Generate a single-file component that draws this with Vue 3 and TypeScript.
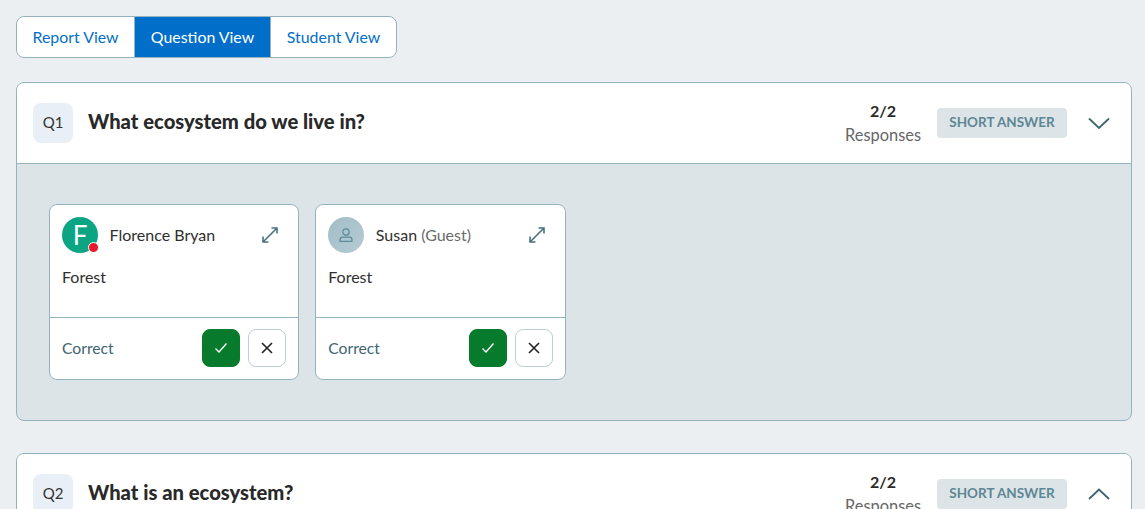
<script setup lang="ts">
interface Resp { name: string; guest?: boolean; initial?: string }
const responses: Resp[] = [
  { name: 'Florence Bryan', initial: 'F' },
  { name: 'Susan', guest: true },
]
const tabs = ['Report View', 'Question View', 'Student View']
</script>

<template>
  <div class="page">
    <div class="tabs">
      <button v-for="(t, i) in tabs" :key="t" class="tab" :class="{ active: i === 1 }">{{ t }}</button>
    </div>

    <section class="question">
      <header class="qhead">
        <div class="qnum">Q1</div>
        <h2 class="qtitle">What ecosystem do we live in?</h2>
        <div class="count"><b>2/2</b><span>Responses</span></div>
        <div class="chip">SHORT ANSWER</div>
        <svg class="chev" width="24" height="14" viewBox="0 0 24 14" fill="none"><path d="M2 2.5 12 12 22 2.5" stroke="#3f6470" stroke-width="1.8" /></svg>
      </header>
      <div class="qbody">
        <article v-for="r in responses" :key="r.name" class="resp">
          <div class="rtop">
            <div class="avatar" :class="{ guest: r.guest }">
              <template v-if="r.initial">{{ r.initial }}<i class="dot"></i></template>
              <svg v-else width="16" height="16" viewBox="0 0 16 16" fill="none" stroke="#5d8a9a" stroke-width="1.2">
                <circle cx="8" cy="5" r="3.2" />
                <path d="M2 14.4v-1.6c0-1.6 1.2-2.6 2.8-2.6h6.4c1.6 0 2.8 1 2.8 2.6v1.6z" stroke-linejoin="round" />
              </svg>
            </div>
            <div class="name">{{ r.name }}<span v-if="r.guest" class="guest-label"> (Guest)</span></div>
            <svg class="expand" width="18" height="18" viewBox="0 0 18 18" fill="none" stroke="#4a7281" stroke-width="1.6">
              <path d="M2 16 16 2M10.5 2H16V7.5M2 10.5V16H7.5" />
            </svg>
          </div>
          <div class="answer">Forest</div>
          <div class="rfoot">
            <span class="correct">Correct</span>
            <button class="mark yes">
              <svg width="14" height="12" viewBox="0 0 14 12" fill="none" stroke="#fff" stroke-width="1.3"><path d="M1.5 6.5 5 10 12.5 1.5" /></svg>
            </button>
            <button class="mark no">
              <svg width="12" height="12" viewBox="0 0 12 12" fill="none" stroke="#222" stroke-width="1.6"><path d="M1 1 11 11M11 1 1 11" /></svg>
            </button>
          </div>
        </article>
      </div>
    </section>

    <section class="question second">
      <header class="qhead">
        <div class="qnum">Q2</div>
        <h2 class="qtitle">What is an ecosystem?</h2>
        <div class="count"><b>2/2</b><span>Responses</span></div>
        <div class="chip">SHORT ANSWER</div>
        <svg class="chev" width="24" height="14" viewBox="0 0 24 14" fill="none"><path d="M2 12 12 2.5 22 12" stroke="#3f6470" stroke-width="1.8" /></svg>
      </header>
    </section>
  </div>
</template>

<style>
html, body { margin: 0; background: #ebeff2; overflow: hidden; }
</style>

<style scoped>
.page {
  height: 509px;
  overflow: hidden;
  box-sizing: border-box;
  padding: 16px 13px 0 16px;
  font-family: Lato, "Liberation Sans", sans-serif;
  color: #2a2a2a;
  display: flex;
  flex-direction: column;
  align-items: stretch;
}
.tabs {
  flex: none;
  display: flex;
  align-self: flex-start;
  height: 42px;
  box-sizing: border-box;
  border: 1px solid #95b3bf;
  border-radius: 8px;
  background: #fff;
  overflow: hidden;
  margin-bottom: 24px;
}
.tab {
  border: 0;
  background: transparent;
  font: inherit;
  font-size: 15.9px;
  color: #016fc9;
  padding: 0 0 2px;
  width: 117px;
}
.tab:nth-child(2) {
  width: 137px;
  background: #016fc9;
  color: #fff;
  border-left: 1px solid #95b3bf;
  border-right: 1px solid #95b3bf;
}
.tab:nth-child(3) { width: 125px; }
.question {
  flex: none;
  border: 1px solid #95b3bf;
  border-radius: 8px;
  background: #dce4e7;
  overflow: hidden;
  margin-bottom: 32px;
}
.qhead {
  height: 80px;
  background: #fff;
  border-bottom: 1px solid #95b3bf;
  display: flex;
  align-items: center;
  padding: 0 20px 0 16px;
}
.qnum {
  width: 40px;
  height: 40px;
  box-sizing: border-box;
  padding-bottom: 2px;
  border-radius: 8px;
  background: #e9eff6;
  display: flex;
  align-items: center;
  justify-content: center;
  font-size: 15px;
  color: #333;
  margin-right: 15px;
}
.qtitle {
  flex: 1;
  margin: 0 0 4px;
  font-size: 20.2px;
  font-weight: 900;
  color: #292929;
}
.count {
  display: flex;
  flex-direction: column;
  align-items: center;
  font-size: 16.4px;
  line-height: 24px;
  color: #666;
  margin-right: 16px;
  margin-bottom: 1px;
}
.count b { color: #2a2a2a; font-weight: 700; font-size: 16px; }
.chip {
  width: 130px;
  height: 30px;
  box-sizing: border-box;
  padding-bottom: 2px;
  border-radius: 4px;
  background: #dce4e7;
  color: #5d8794;
  font-size: 13.5px;
  font-weight: 700;
  display: flex;
  align-items: center;
  justify-content: center;
  margin-right: 20px;
}
.chev { flex: none; }
.qbody {
  height: 256px;
  box-sizing: border-box;
  padding: 40px 32px;
  display: flex;
  gap: 16px;
  align-items: flex-start;
}
.resp {
  width: 250.25px;
  height: 176px;
  box-sizing: border-box;
  border: 1px solid #95b3bf;
  border-radius: 8px;
  background: #fff;
  display: flex;
  flex-direction: column;
}
.rtop {
  display: flex;
  align-items: center;
  padding: 12px 12px 0;
  height: 36px;
}
.avatar {
  position: relative;
  width: 36px;
  height: 36px;
  flex: none;
  border-radius: 50%;
  background: #0ba583;
  color: #fff;
  font-size: 26px;
  display: flex;
  align-items: center;
  justify-content: center;
  margin-right: 11.6px;
}
.avatar.guest { background: linear-gradient(135deg, #a1bcc6, #b7ccd4); }
.dot {
  position: absolute;
  right: -1px;
  bottom: 0;
  width: 9px;
  height: 9px;
  border-radius: 50%;
  background: #e8192c;
  border: 1.5px solid #fff;
}
.name { flex: 1; font-size: 16px; color: #2f2f2f; margin-top: -2px; }
.guest-label { color: #6b6b6b; }
.expand { margin-right: 7px; }
.answer {
  font-size: 16px;
  padding: 14px 12px 0;
  flex: 1;
  color: #2f2f2f;
  line-height: 19px;
}
.rfoot {
  height: 62px;
  box-sizing: border-box;
  border-top: 1px solid #95b3bf;
  display: flex;
  align-items: center;
  padding: 0 12px 1px;
  gap: 8px;
}
.correct { flex: 1; color: #3f6472; font-size: 15.7px; }
.mark {
  width: 38px;
  height: 38px;
  padding: 0;
  border-radius: 8px;
  display: flex;
  align-items: center;
  justify-content: center;
  background: #fff;
  border: 1px solid #bccfd6;
}
.mark.yes { background: #077a2b; border-color: #077a2b; }
</style>
